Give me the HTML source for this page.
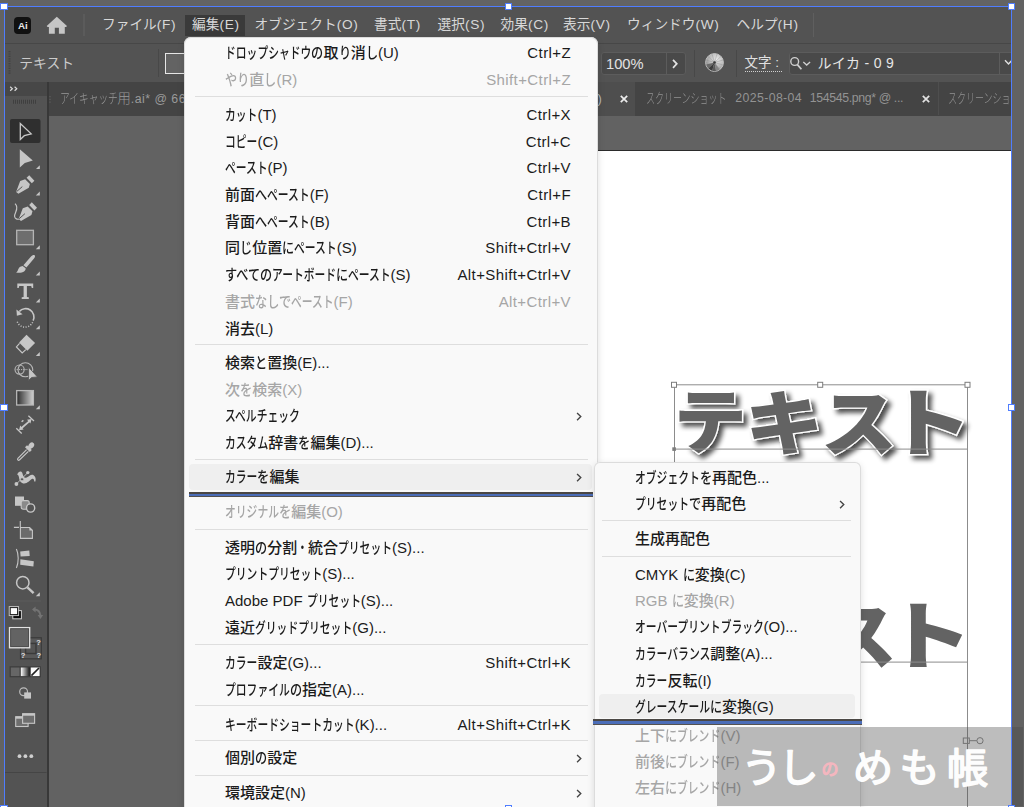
<!DOCTYPE html>
<html lang="ja">
<head>
<meta charset="utf-8">
<title>Illustrator 編集メニュー</title>
<style>
*{box-sizing:border-box;margin:0;padding:0}
html,body{width:1024px;height:807px;overflow:hidden;background:#636363}
body{position:relative;font-family:"Liberation Sans","Noto Sans CJK JP",sans-serif;font-size:13px;color:#d4d4d4}
.a{position:absolute}
svg{position:absolute;overflow:visible}
.kn{display:inline-block;transform-origin:0 50%;white-space:nowrap}
#canvas{left:5px;top:7px;width:1006px;height:800px;background:#626262}
#appbar{left:5px;top:7px;width:1006px;height:36px;background:#535353}
#appline{left:5px;top:43px;width:1006px;height:1px;background:#474747}
#ctrl{left:5px;top:44px;width:1006px;height:38px;background:#535353}
.mi .k{letter-spacing:.7px}
.mi{position:absolute;top:14px;height:22px;line-height:22px;font-size:13.7px;color:#d8d8d8;white-space:nowrap}
#tabs{left:48px;top:82px;width:963px;height:33.6px;background:#444444}
.tab{position:absolute;top:82px;height:33px;line-height:33px;font-size:12.3px;color:#939393;white-space:nowrap;font-weight:300}
#tools{left:5px;top:82px;width:42px;height:725px;background:#535353}
#toolhead{left:5px;top:82px;width:42px;height:14px;background:#474747}
#toolsep{left:47px;top:82px;width:2.3px;height:725px;background:#383838}
#art{left:588px;top:150px;width:423px;height:657px;background:#fff}
.big{position:absolute;left:674.5px;font-family:"Noto Sans CJK JP","Liberation Sans",sans-serif;font-weight:900;font-size:73.5px;line-height:73.5px;color:#636363;white-space:nowrap}
.menu{position:absolute;background:#f9f9f9;border-radius:8px;box-shadow:inset 0 0 0 1px #dcdcdc,0 2px 7px rgba(0,0,0,.13);color:#1b1b1b;font-size:15px;overflow:hidden}
.row{position:absolute;left:0;right:0;height:26px;line-height:26px;white-space:nowrap}
.row .l{position:absolute;left:41px;top:0;font-weight:500}
.row .r{position:absolute;right:26.6px;top:0;letter-spacing:.4px}
.row.dis{color:#a6a6a6}
.sep{position:absolute;height:1px;background:#dedede}
.hl{position:absolute;background:#efefef;border-radius:4px}
.chev{position:absolute;width:6.2px;height:8.9px}
.sub .row .l{left:41.1px}
.hd{position:absolute;width:7.4px;height:7.4px;background:#fff;border:1px solid #4f7dff}
</style>
</head>
<body>
<div class="a" id="canvas"></div>
<div class="a" id="art"></div>
<!-- artboard content -->
<div class="a" style="left:588px;top:150px;width:423px;height:1px;background:#2b2b2b"></div>
<svg style="left:0;top:0" width="1024" height="807" viewBox="0 0 1024 807">
  <defs>
    <filter id="ds" x="-5%" y="-10%" width="112%" height="130%"><feGaussianBlur in="SourceAlpha" stdDeviation="2.5"/><feOffset dx="3.6" dy="3.8"/><feComponentTransfer><feFuncA type="linear" slope=".7"/></feComponentTransfer><feMerge><feMergeNode/><feMergeNode in="SourceGraphic"/></feMerge></filter>
  </defs>
  <g font-family="Noto Sans CJK JP, Liberation Sans, sans-serif" font-weight="900" font-size="73.5" fill="#636363">
    <g stroke="#ffffff" stroke-width="2.6" paint-order="stroke fill" stroke-linejoin="miter" filter="url(#ds)"><text transform="translate(673.85,448.45) scale(0.992,0.956)">テ</text><text transform="translate(744.85,449.07) scale(1.075,0.965)">キ</text><text transform="translate(820.8,449.9) scale(1.04,0.997)">ス</text><text transform="translate(884.5,449.95) scale(1.2,1.011)">ト</text></g>
    <g><text transform="translate(673.85,661.45) scale(0.992,0.956)">テ</text><text transform="translate(744.85,662.07) scale(1.075,0.965)">キ</text><text transform="translate(820.8,662.90) scale(1.04,0.997)">ス</text><text transform="translate(884.5,662.95) scale(1.2,1.011)">ト</text></g>
  </g>
  <g fill="none" stroke="#8c8c8c" stroke-width="1">
    <path d="M674.5 384.8H967.5V807M674.5 384.8V807M674.5 449.1H967.5M674.5 662.1H967.5"/>
  </g>
  <g fill="#ffffff" stroke="#7d7d7d" stroke-width="1">
    <rect x="671.5" y="382.3" width="5" height="5"/><rect x="817.7" y="382.3" width="5" height="5"/><rect x="965" y="382.3" width="5" height="5"/>
  </g>
  <rect x="672.3" y="447.3" width="3.6" height="3.6" fill="#7d7d7d"/>
  <g fill="none" stroke="#8c8c8c" stroke-width="1"><rect x="963.3" y="738" width="6" height="5.4"/><path d="M969.3 740.7H976.8"/><circle cx="980" cy="740.7" r="3.1"/></g>
</svg>

<div class="a" id="appbar"></div>
<div class="a" id="appline"></div>
<div class="a" id="ctrl"></div>

<!-- app bar -->
<div class="a" style="left:14.2px;top:17.2px;width:17.2px;height:16.7px;border-radius:4px;background:#111;color:#e6e6e6;font-size:9.8px;font-weight:bold;line-height:17.2px;text-align:center;letter-spacing:-.2px">Ai</div>
<svg style="left:0;top:0" width="80" height="40" viewBox="0 0 80 40"><path d="M56.8 16.7L46.7 26L47.6 27H48.9V33.8H54.8V27.7H58.9V33.8H64.8V27H66.1L67 26Z" fill="#c6c6c6"/></svg>
<div class="a" style="left:82.6px;top:13.7px;width:2px;height:22px;background:#5b5b5b"></div>
<div class="a" style="left:185px;top:15px;width:60px;height:21px;background:#3a3a3a"></div>
<div class="mi" style="left:102px">ファイル<span class="k">(F)</span></div>
<div class="mi" style="left:192px">編集<span class="k">(E)</span></div>
<div class="mi" style="left:254.5px">オブジェクト<span class="k">(O)</span></div>
<div class="mi" style="left:374px">書式<span class="k">(T)</span></div>
<div class="mi" style="left:437.5px">選択<span class="k">(S)</span></div>
<div class="mi" style="left:500.5px">効果<span class="k">(C)</span></div>
<div class="mi" style="left:563px">表示<span class="k">(V)</span></div>
<div class="mi" style="left:627px">ウィンドウ<span class="k">(W)</span></div>
<div class="mi" style="left:736.5px">ヘルプ<span class="k">(H)</span></div>
<div class="a" style="left:813px;top:13px;width:1px;height:24px;background:#5f5f5f"></div>


<!-- control bar -->
<svg style="left:8px;top:51px" width="3" height="24" viewBox="0 0 3 24"><path d="M1.5 0V24" stroke="#424242" stroke-width="2" stroke-dasharray="1.2 1.2"/></svg>
<div class="a" style="left:19.3px;top:52.6px;height:22px;line-height:22px;font-size:13.8px;color:#cbcbcb">テキスト</div>
<div class="a" style="left:158px;top:49px;width:1px;height:28px;background:#484848"></div>
<div class="a" style="left:165px;top:52.5px;width:30px;height:21px;border:1.6px solid #e6e6e6;background:#636363"></div>
<div class="a" style="left:601px;top:51.5px;width:85px;height:23px;border:1px solid #5c5c5c;border-radius:3px;background:#494949"></div>
<div class="a" style="left:665.5px;top:52.5px;width:1px;height:21px;background:#5c5c5c"></div>
<div class="a" style="left:606px;top:53.1px;height:22px;line-height:22px;font-size:14.7px;color:#e2e2e2">100%</div>
<svg style="left:672px;top:58.6px" width="6" height="10" viewBox="0 0 6 10"><path d="M1 .8L4.8 4.8L1 8.8" fill="none" stroke="#e4e4e4" stroke-width="1.7"/></svg>
<div class="a" style="left:694px;top:50px;width:1px;height:27px;background:#484848"></div>
<svg style="left:705.1px;top:53px" width="19" height="19" viewBox="0 0 19 19">
  <defs><radialGradient id="rg" cx=".62" cy=".32" r=".75"><stop offset="0" stop-color="#e9e9e9"/><stop offset=".55" stop-color="#b9b9b9"/><stop offset="1" stop-color="#7c7c7c"/></radialGradient></defs>
  <circle cx="9.5" cy="9.5" r="8.9" fill="url(#rg)" stroke="#cdcdcd" stroke-width=".9"/>
  <path d="M9.5 9.5L1.2 11.6A8.6 8.6 0 0 0 3.6 15.6Z" fill="#6a6a6a"/>
  <path d="M9.5 9.5L3.6 15.6A8.6 8.6 0 0 0 7.2 17.8Z" fill="#3c3c3c"/>
  <path d="M9.5 9.5L7.2 17.8A8.6 8.6 0 0 0 11 18Z" fill="#5a5a5a"/>
  <path d="M9.5 9.5L11 18A8.6 8.6 0 0 0 14.6 16.4Z" fill="#858585"/>
  <g stroke="#8c8c8c" stroke-width=".5" opacity=".8"><path d="M9.5 9.5L1 7M9.5 9.5L3 3.4M9.5 9.5L7 1M9.5 9.5L12 1M9.5 9.5L16 3.4M9.5 9.5L18 7M9.5 9.5L18 12M9.5 9.5L14.6 16.4"/></g>
  <circle cx="9.5" cy="9.5" r="1.3" fill="#3a3a3a"/>
</svg>
<div class="a" style="left:736px;top:50px;width:1px;height:27px;background:#484848"></div>
<div class="a" style="left:744.5px;top:52px;height:22px;line-height:22px;font-size:13.5px;color:#e0e0e0;white-space:nowrap">文字 :</div>
<div class="a" style="left:744.5px;top:70.5px;width:37.5px;height:0;border-top:1px dotted #d0d0d0"></div>
<div class="a" style="left:789px;top:51.5px;width:230px;height:23px;border:1px solid #5c5c5c;border-radius:3px;background:#494949"></div>
<div class="a" style="left:998.5px;top:52.5px;width:1px;height:21px;background:#5c5c5c"></div>
<svg style="left:0;top:0" width="820" height="80" viewBox="0 0 820 80"><g fill="none" stroke="#d0d0d0"><circle cx="794.7" cy="61.5" r="3.9" stroke-width="1.4"/><path d="M797.4 64.6L801.4 69.2" stroke-width="1.7"/><path d="M803.3 62L806.7 65.1L810.1 62" stroke-width="1.3"/></g></svg>
<div class="a" style="left:817.5px;top:52px;height:22px;line-height:22px;font-size:14px;color:#e6e6e6;white-space:nowrap;letter-spacing:.3px">ルイカ - 0 9</div>
<svg style="left:1003.6px;top:59.4px" width="9" height="7" viewBox="0 0 10 8"><path d="M1 1.5 L5 5.8 L9 1.5" fill="none" stroke="#e0e0e0" stroke-width="1.6"/></svg>

<div class="a" id="tabs"></div>

<!-- tabs -->
<div class="a" style="left:330px;top:82px;width:305px;height:33.6px;background:#4e4e4e"></div>
<svg style="left:48.6px;top:96px" width="2" height="7" viewBox="0 0 2 7"><path d="M1 0V7" stroke="#5e5e5e" stroke-width="1.2" stroke-dasharray="1.2 1.6"/></svg>
<div class="tab" style="left:59.5px;color:#9a9a9a"><span class="kn" style="font-size:13.6px;transform:scaleX(0.715);margin-right:-23.26px">アイキャッチ</span><span style="font-size:13.6px">用</span><span style="letter-spacing:.5px">.ai* @ 66.67% (RGB/</span><span class="kn" style="font-size:13.6px;transform:scaleX(0.7);margin-right:-20.40px">プレビュー</span>)</div>
<div class="tab" style="left:597.6px;color:#b4b4b4;font-size:13px">)</div>
<svg style="left:619.5px;top:94.5px" width="8" height="8" viewBox="0 0 8 8"><path d="M.8 .8L7.2 7.2M7.2 .8L.8 7.2" stroke="#ececec" stroke-width="1.7"/></svg>
<div class="tab" style="left:645.5px"><span class="kn" style="font-size:13.6px;transform:scaleX(0.662);margin-right:-41.37px">スクリーンショット</span></div>
<div class="tab" style="left:735.2px;letter-spacing:.4px">2025-08-04</div>
<div class="tab" style="left:809.8px;letter-spacing:-.36px">154545.png* @ ...</div>
<svg style="left:922px;top:94.5px" width="8" height="8" viewBox="0 0 8 8"><path d="M.8 .8L7.2 7.2M7.2 .8L.8 7.2" stroke="#e2e2e2" stroke-width="1.7"/></svg>
<div class="a" style="left:938px;top:82px;width:1px;height:33px;background:#4e4e4e"></div>
<div class="tab" style="left:948px;width:63px;overflow:hidden"><span class="kn" style="font-size:13.6px;transform:scaleX(0.662);margin-right:-41.37px">スクリーンショット</span></div>

<div class="a" id="tools"></div>
<div class="a" id="toolhead"></div>
<div class="a" id="toolsep"></div>
<!-- tools panel -->
<svg style="left:0;top:0" width="60" height="807" viewBox="0 0 60 807">
<defs>
  <linearGradient id="gr1" x1="0" x2="1" y1="0" y2="0"><stop offset="0" stop-color="#2b2b2b"/><stop offset="1" stop-color="#d2d2d2"/></linearGradient>
  <linearGradient id="gr2" x1="0" x2="1" y1="0" y2="0"><stop offset="0" stop-color="#ffffff"/><stop offset="1" stop-color="#1a1a1a"/></linearGradient>
</defs>
<g fill="#c6c6c6">
<!-- header chevrons + gripper -->
<path d="M10.2 86.7L12.4 88.7L10.2 90.7M14.6 86.7L16.8 88.7L14.6 90.7" fill="none" stroke="#dcdcdc" stroke-width="1.15"/>
<path d="M13 101.7H36" stroke="#3f3f3f" stroke-width="4" stroke-dasharray="1 1" fill="none"/>
<!-- selection (active) -->
<rect x="10" y="119" width="30.5" height="24" rx="2" fill="#2f2f2f"/>
<path d="M20.3 123.6V139.4L24.3 135.7L31.2 133.9Z" fill="none" stroke="#c9c9c9" stroke-width="1.3" stroke-linejoin="miter"/>
<!-- direct selection -->
<path d="M19.8 149.3V167.6L24.8 163L32.8 160.4Z"/>
<path d="M39.8 165.2V169H36Z"/>
<!-- pen -->
<g id="pen"><path d="M16.1 191.9L20.2 181.1L25.1 179.3L29.9 184.1L28.8 187.8L18.4 193.8Z"/><path d="M26.6 177.8L29.2 175.2L34.4 180.7L31.8 183.3Z"/><path d="M16.6 191.6L22.3 186.6" stroke="#535353" stroke-width="1" fill="none"/></g>
<path d="M39.8 191.6V195.6H35.8Z"/>
<!-- curvature -->
<g transform="translate(2.6,27.1)"><path d="M16.1 191.9L20.2 181.1L25.1 179.3L29.9 184.1L28.8 187.8L18.4 193.8Z"/><path d="M26.6 177.8L29.2 175.2L34.4 180.7L31.8 183.3Z"/><path d="M16.6 191.6L22.3 186.6" stroke="#535353" stroke-width="1" fill="none"/></g>
<path d="M15 203.6C20 208 14 213 14.6 216.5C15 219 17.5 219.6 19 219" fill="none" stroke="#c6c6c6" stroke-width="1.2"/>
<!-- rectangle -->
<rect x="16.7" y="230.3" width="16.7" height="14.4" fill="#6e6e6e" stroke="#b4b4b4" stroke-width="1.3"/>
<path d="M39.8 245.2V249.2H35.8Z"/>
<!-- brush -->
<path d="M34.6 255.2C35.6 256 34.8 257.6 34 258.6L26.4 267.4L23.4 265.2L31 256.6C32 255.4 33.6 254.6 34.6 255.2Z"/>
<path d="M22.6 265.9L25.6 268.2C26 271 22.5 273.6 16 272.6C18.6 271.4 17.6 266.4 22.6 265.9Z"/>
<path d="M39.8 271.6V275.6H35.8Z"/>
<!-- type -->
<path d="M17.3 283.5H33.2V288H31.8L31.2 286.1H26.9V296.9L28.8 297.3V299.1H21.7V297.3L23.6 296.9V286.1H19.3L18.7 288H17.3Z"/>
<path d="M39.8 298.6V302.6H35.8Z"/>
<!-- rotate -->
<path d="M19.3 311.6A8.3 8.3 0 0 1 33.1 320.6" fill="none" stroke="#c6c6c6" stroke-width="1.6"/>
<path d="M16.4 309.4L16.9 315.8L22.6 314.2Z"/>
<path d="M32.6 322.2A8.3 8.3 0 0 1 17 321" fill="none" stroke="#c6c6c6" stroke-width="1.5" stroke-dasharray="1 1.6"/>
<path d="M39.8 325.2V329.2H35.8Z"/>
<!-- eraser -->
<path d="M26.5 334.7L35.1 342.9L27.3 350.7L19.1 342.5Z"/>
<path d="M19.6 343.4L16.4 346.9L22.2 353L25.8 349.6" fill="none" stroke="#c6c6c6" stroke-width="1.2"/>
<path d="M39.8 352V356H35.8Z"/>
<!-- shape builder -->
<circle cx="19.6" cy="369.6" r="4.6" fill="none" stroke="#b8b8b8" stroke-width="1.1"/>
<ellipse cx="25.4" cy="369.8" rx="7.4" ry="7" fill="none" stroke="#b8b8b8" stroke-width="1.1"/>
<path d="M16.6 369.6H28" stroke="#b8b8b8" stroke-width="1" stroke-dasharray="1.2 1" fill="none"/>
<path d="M28.6 367.2V380.4L31.6 377.5L37.4 376.9Z" stroke="#535353" stroke-width=".8"/>
<!-- gradient -->
<rect x="16.7" y="390.6" width="16.7" height="14.4" fill="url(#gr1)" stroke="#b8b8b8" stroke-width="1.3"/>
<path d="M39.8 405.2V409.2H35.8Z"/>
<!-- measure -->
<g fill="none" stroke="#c6c6c6"><path d="M16.3 428.3L21.7 433.5M28.4 415.7L34 420.9" stroke-width="1.3"/><path d="M20.4 429L30.4 420.4" stroke-width="1.8"/><path d="M21.6 421.8L23.4 420.4" stroke-width="1.4"/></g>
<path d="M19 430.2L20.2 425.6L23.6 429.4ZM31.6 419L30.4 423.6L27 419.8Z"/>
<!-- eyedropper -->
<path d="M26.6 449.6L17.9 458.4C17 459.4 18.2 460.8 19.4 460L28.4 451.4" fill="none" stroke="#c6c6c6" stroke-width="1.2"/>
<path d="M25 447.2L27 445.2L28.2 446.2C28.6 444.4 30.6 442 32.6 442.4C34.6 443 34.8 445.2 33.6 446.8C32.8 447.8 31.6 448.6 30.6 448.8L31.8 450L29.8 452Z"/>
<!-- puppet warp -->
<path d="M17.2 474.6C18.4 471 21.6 470.4 22.4 473.2C23.2 476 24 478.6 26.6 477.6C29.4 476.4 31 473.6 33.6 475.2C36 476.8 35.8 479.6 35.4 481.6L34.2 481.4C34.2 479.6 33.4 478.2 31.8 479C29.600000000000001 480.2 27.4 484 23.2 483.4C20.4 483 19.4 480.4 19 477.600000000000001C18.8 476 18.2 475 17.2 474.6Z"/>
<circle cx="27.8" cy="472.6" r="1.7"/><circle cx="16.4" cy="484" r="1.9"/>
<path d="M16.4 484L27.8 472.6" stroke="#c6c6c6" stroke-width=".9" fill="none"/>
<circle cx="22" cy="479.2" r="1.5" fill="#535353" stroke="#c6c6c6" stroke-width=".7"/>
<!-- blend -->
<rect x="15" y="496.5" width="9" height="9.3"/>
<rect x="21.2" y="500.6" width="8" height="8.6" rx="2" fill="#8a8a8a" stroke="#c6c6c6" stroke-width="1.1"/>
<circle cx="30.6" cy="508" r="4.1" fill="#535353" stroke="#c6c6c6" stroke-width="1.4"/>
<!-- artboard -->
<path d="M20.4 527.5H29.6L32.4 530.3V538.4H20.4Z" fill="#6b6b6b" stroke="#c6c6c6" stroke-width="1.1"/>
<path d="M29.4 527.5V530.5H32.4Z"/>
<path d="M20.3 521V527M13.9 527.4H19" stroke="#c6c6c6" stroke-width="1.1" fill="none"/>
<!-- align on path -->
<path d="M16.4 548.9C18.8 554 18.8 562.6 16.4 567.9" fill="none" stroke="#c6c6c6" stroke-width="1.1"/>
<path d="M20.2 551.4L29.3 550.6L29.7 556L20.6 556.6Z"/>
<path d="M20.4 559.3L33.8 561.2L33.4 566.6L20.2 564.8Z"/>
<!-- zoom -->
<circle cx="22.8" cy="582.7" r="6.2" fill="none" stroke="#c6c6c6" stroke-width="1.5"/>
<path d="M27.4 587.4L33.6 593.1" stroke="#c6c6c6" stroke-width="2.4" fill="none"/>
<path d="M39.8 592.2V596.2H35.8Z"/>
</g>
<!-- separator -->
<rect x="8" y="600.5" width="33" height="1" fill="#5c5c5c"/>
<!-- default fill/stroke -->
<rect x="12.8" y="610.6" width="8.6" height="8.2" fill="#0a0a0a" stroke="#cfcfcf" stroke-width="1"/>
<rect x="10.2" y="607.6" width="7.4" height="7" fill="#fdfdfd" stroke="#1c1c1c" stroke-width="1"/>
<rect x="9.2" y="606.6" width="9.4" height="9" fill="none" stroke="#c8c8c8" stroke-width=".9"/>
<!-- swap -->
<path d="M33.4 609.4C37.4 609.2 40 611 40.4 615.4" fill="none" stroke="#737373" stroke-width="2"/>
<path d="M32 609.4L35.6 606.4V612.4ZM40.4 619L37.6 615H43.2Z" fill="#737373"/>
<!-- stroke box -->
<rect x="20.5" y="637.8" width="20.8" height="21" fill="#595959" stroke="#3a3a3a" stroke-width="1.2"/>
<rect x="25.6" y="643.4" width="10.4" height="10.1" fill="#555555" stroke="#3a3a3a" stroke-width="1.4"/>
<!-- fill box -->
<rect x="9.5" y="627.6" width="20.2" height="20.2" fill="#636363" stroke="#e2e2e2" stroke-width="1.3"/>
<rect x="10.7" y="628.8" width="17.8" height="17.8" fill="none" stroke="#4a4a4a" stroke-width=".8"/>
<g font-family="Liberation Sans, sans-serif" font-size="7.5" font-weight="bold" fill="#e0e0e0"><text x="36.2" y="644.6">?</text><text x="20.8" y="657.6">?</text><text x="36.6" y="657.6">?</text></g>
<!-- colour mode buttons -->
<rect x="9.6" y="666.3" width="31.2" height="11" fill="#3c3c3c"/>
<rect x="10.8" y="667.5" width="8.8" height="8.6" fill="#666666"/>
<rect x="20.8" y="667.5" width="8.8" height="8.6" fill="url(#gr2)"/>
<rect x="30.8" y="667.5" width="8.8" height="8.6" fill="#fbfbfb"/>
<path d="M31.4 675.6L39 668" stroke="#222" stroke-width="1.7"/>
<!-- draw mode -->
<circle cx="23.6" cy="691.8" r="3.9" fill="none" stroke="#bdbdbd" stroke-width="1.2"/>
<rect x="24.2" y="692.4" width="6.8" height="6.2" fill="#c6c6c6"/>
<!-- screen mode -->
<rect x="15.7" y="716.7" width="12.4" height="9.8" fill="#6e6e6e" stroke="#c6c6c6" stroke-width="1.1"/>
<rect x="15.7" y="716.7" width="12.4" height="2" fill="#c6c6c6"/>
<rect x="22.6" y="713.7" width="12" height="9.6" fill="#6e6e6e" stroke="#c6c6c6" stroke-width="1.1"/>
<rect x="22.6" y="713.7" width="12" height="2" fill="#c6c6c6"/>
<!-- more -->
<circle cx="19.5" cy="756.2" r="1.9" fill="#cfcfcf"/><circle cx="25.4" cy="756.2" r="1.9" fill="#cfcfcf"/><circle cx="31.3" cy="756.2" r="1.9" fill="#cfcfcf"/>
<rect x="5" y="772" width="41.5" height="1" fill="#454545"/>
</svg>


<!-- edit menu -->
<div class="menu" style="left:184px;top:36.5px;width:413.6px;height:800px;border-radius:7px">
<div class="hl" style="left:5px;top:427.5px;width:403px;height:26px"></div>
<div class="row" style="top:3.6px"><span class="l"><span class="kn" style="transform:scaleX(0.72);margin-right:-33.60px">ドロップシャドウ</span><span class="kn" style="transform:scaleX(0.81);margin-right:-2.85px">の</span>取<span class="kn" style="transform:scaleX(0.81);margin-right:-2.85px">り</span>消<span class="kn" style="transform:scaleX(0.81);margin-right:-2.85px">し</span>(U)</span><span class="r">Ctrl+Z</span></div>
<div class="row dis" style="top:30.5px"><span class="l"><span class="kn" style="transform:scaleX(0.81);margin-right:-5.70px">やり</span>直<span class="kn" style="transform:scaleX(0.81);margin-right:-2.85px">し</span>(R)</span><span class="r">Shift+Ctrl+Z</span></div>
<div class="sep" style="left:10.5px;top:59.4px;width:393px"></div>
<div class="row" style="top:65.8px"><span class="l"><span class="kn" style="transform:scaleX(0.72);margin-right:-12.60px">カット</span>(T)</span><span class="r">Ctrl+X</span></div>
<div class="row" style="top:92.3px"><span class="l"><span class="kn" style="transform:scaleX(0.72);margin-right:-12.60px">コピー</span>(C)</span><span class="r">Ctrl+C</span></div>
<div class="row" style="top:118.8px"><span class="l"><span class="kn" style="transform:scaleX(0.72);margin-right:-16.80px">ペースト</span>(P)</span><span class="r">Ctrl+V</span></div>
<div class="row" style="top:145.5px"><span class="l">前面<span class="kn" style="transform:scaleX(0.81);margin-right:-2.85px">へ</span><span class="kn" style="transform:scaleX(0.72);margin-right:-16.80px">ペースト</span>(F)</span><span class="r">Ctrl+F</span></div>
<div class="row" style="top:172.1px"><span class="l">背面<span class="kn" style="transform:scaleX(0.81);margin-right:-2.85px">へ</span><span class="kn" style="transform:scaleX(0.72);margin-right:-16.80px">ペースト</span>(B)</span><span class="r">Ctrl+B</span></div>
<div class="row" style="top:198.8px"><span class="l">同<span class="kn" style="transform:scaleX(0.81);margin-right:-2.85px">じ</span>位置<span class="kn" style="transform:scaleX(0.81);margin-right:-2.85px">に</span><span class="kn" style="transform:scaleX(0.72);margin-right:-16.80px">ペースト</span>(S)</span><span class="r">Shift+Ctrl+V</span></div>
<div class="row" style="top:225.4px"><span class="l"><span class="kn" style="transform:scaleX(0.81);margin-right:-11.40px">すべての</span><span class="kn" style="transform:scaleX(0.72);margin-right:-25.20px">アートボード</span><span class="kn" style="transform:scaleX(0.81);margin-right:-2.85px">に</span><span class="kn" style="transform:scaleX(0.72);margin-right:-16.80px">ペースト</span>(S)</span><span class="r">Alt+Shift+Ctrl+V</span></div>
<div class="row dis" style="top:252.1px"><span class="l">書式<span class="kn" style="transform:scaleX(0.81);margin-right:-8.55px">なしで</span><span class="kn" style="transform:scaleX(0.72);margin-right:-16.80px">ペースト</span>(F)</span><span class="r">Alt+Ctrl+V</span></div>
<div class="row" style="top:279.1px"><span class="l">消去(L)</span></div>
<div class="sep" style="left:10.5px;top:307.2px;width:393px"></div>
<div class="row" style="top:313.6px"><span class="l">検索<span class="kn" style="transform:scaleX(0.81);margin-right:-2.85px">と</span>置換(E)...</span></div>
<div class="row dis" style="top:340.5px"><span class="l">次<span class="kn" style="transform:scaleX(0.81);margin-right:-2.85px">を</span>検索(X)</span></div>
<div class="row" style="top:366.9px"><span class="l"><span class="kn" style="transform:scaleX(0.72);margin-right:-29.40px">スペルチェック</span></span><svg class="chev" style="right:15.4px;top:8.6px" viewBox="0 0 7 10"><path d="M1.2 1L5.4 5.1L1.2 9.2" fill="none" stroke="#444444" stroke-width="1.55"/></svg></div>
<div class="row" style="top:393.4px"><span class="l"><span class="kn" style="transform:scaleX(0.72);margin-right:-16.80px">カスタム</span>辞書<span class="kn" style="transform:scaleX(0.81);margin-right:-2.85px">を</span>編集(D)...</span></div>
<div class="sep" style="left:10.5px;top:422.3px;width:393px"></div>
<div class="row" style="top:427.8px"><span class="l"><span class="kn" style="transform:scaleX(0.72);margin-right:-12.60px">カラー</span><span class="kn" style="transform:scaleX(0.81);margin-right:-2.85px">を</span>編集</span><svg class="chev" style="right:15.4px;top:8.6px" viewBox="0 0 7 10"><path d="M1.2 1L5.4 5.1L1.2 9.2" fill="none" stroke="#444444" stroke-width="1.55"/></svg></div>
<div class="row dis" style="top:462.7px"><span class="l"><span class="kn" style="transform:scaleX(0.72);margin-right:-21.00px">オリジナル</span><span class="kn" style="transform:scaleX(0.81);margin-right:-2.85px">を</span>編集(O)</span></div>
<div class="sep" style="left:10.5px;top:492.0px;width:393px"></div>
<div class="row" style="top:498.4px"><span class="l">透明<span class="kn" style="transform:scaleX(0.81);margin-right:-2.85px">の</span>分割<span class="kn" style="transform:scaleX(0.72);margin-right:-4.20px">・</span>統合<span class="kn" style="transform:scaleX(0.72);margin-right:-21.00px">プリセット</span>(S)...</span></div>
<div class="row" style="top:524.9px"><span class="l"><span class="kn" style="transform:scaleX(0.72);margin-right:-37.80px">プリントプリセット</span>(S)...</span></div>
<div class="row" style="top:551.7px"><span class="l">Adobe PDF <span class="kn" style="transform:scaleX(0.72);margin-right:-21.00px">プリセット</span>(S)...</span></div>
<div class="row" style="top:578.2px"><span class="l">遠近<span class="kn" style="transform:scaleX(0.72);margin-right:-37.80px">グリッドプリセット</span>(G)...</span></div>
<div class="sep" style="left:10.5px;top:607.2px;width:393px"></div>
<div class="row" style="top:613.3px"><span class="l"><span class="kn" style="transform:scaleX(0.72);margin-right:-12.60px">カラー</span>設定(G)...</span><span class="r">Shift+Ctrl+K</span></div>
<div class="row" style="top:640.5px"><span class="l"><span class="kn" style="transform:scaleX(0.72);margin-right:-25.20px">プロファイル</span><span class="kn" style="transform:scaleX(0.81);margin-right:-2.85px">の</span>指定(A)...</span></div>
<div class="sep" style="left:10.5px;top:668.6px;width:393px"></div>
<div class="row" style="top:675.0px"><span class="l"><span class="kn" style="transform:scaleX(0.72);margin-right:-50.40px">キーボードショートカット</span>(K)...</span><span class="r">Alt+Shift+Ctrl+K</span></div>
<div class="sep" style="left:10.5px;top:703.5px;width:393px"></div>
<div class="row" style="top:708.5px"><span class="l">個別<span class="kn" style="transform:scaleX(0.81);margin-right:-2.85px">の</span>設定</span><svg class="chev" style="right:15.4px;top:8.6px" viewBox="0 0 7 10"><path d="M1.2 1L5.4 5.1L1.2 9.2" fill="none" stroke="#444444" stroke-width="1.55"/></svg></div>
<div class="sep" style="left:10.5px;top:738.7px;width:393px"></div>
<div class="row" style="top:743.5px"><span class="l">環境設定(N)</span><svg class="chev" style="right:15.4px;top:8.6px" viewBox="0 0 7 10"><path d="M1.2 1L5.4 5.1L1.2 9.2" fill="none" stroke="#444444" stroke-width="1.55"/></svg></div>
</div>
<div class="a" style="left:189px;top:491.6px;width:403.8px;height:5.4px;background:#4b6db8;border-top:2.3px solid #4b4845;border-bottom:.7px solid #55524f"></div>


<!-- colour submenu -->
<div class="menu sub" style="left:593.9px;top:461.8px;width:267.1px;height:400px;border-radius:6px">
<div class="hl" style="left:5.1px;top:232.2px;width:256px;height:24.5px"></div>
<div class="row" style="top:3.0px"><span class="l"><span class="kn" style="transform:scaleX(0.72);margin-right:-25.20px">オブジェクト</span><span class="kn" style="transform:scaleX(0.81);margin-right:-2.85px">を</span>再配色...</span></div>
<div class="row" style="top:29.3px"><span class="l"><span class="kn" style="transform:scaleX(0.72);margin-right:-21.00px">プリセット</span><span class="kn" style="transform:scaleX(0.81);margin-right:-2.85px">で</span>再配色</span><svg class="chev" style="right:15.7px;top:8.6px" viewBox="0 0 7 10"><path d="M1.2 1L5.4 5.1L1.2 9.2" fill="none" stroke="#444444" stroke-width="1.55"/></svg></div>
<div class="sep" style="left:8.6px;top:58.7px;width:249px"></div>
<div class="row" style="top:63.9px"><span class="l">生成再配色</span></div>
<div class="sep" style="left:8.6px;top:94.2px;width:249px"></div>
<div class="row" style="top:99.9px"><span class="l">CMYK <span class="kn" style="transform:scaleX(0.81);margin-right:-2.85px">に</span>変換(C)</span></div>
<div class="row dis" style="top:126.2px"><span class="l">RGB <span class="kn" style="transform:scaleX(0.81);margin-right:-2.85px">に</span>変換(R)</span></div>
<div class="row" style="top:152.6px"><span class="l"><span class="kn" style="transform:scaleX(0.72);margin-right:-50.40px">オーバープリントブラック</span>(O)...</span></div>
<div class="row" style="top:179.0px"><span class="l"><span class="kn" style="transform:scaleX(0.72);margin-right:-29.40px">カラーバランス</span>調整(A)...</span></div>
<div class="row" style="top:205.9px"><span class="l"><span class="kn" style="transform:scaleX(0.72);margin-right:-12.60px">カラー</span>反転(I)</span></div>
<div class="row" style="top:232.7px"><span class="l"><span class="kn" style="transform:scaleX(0.72);margin-right:-29.40px">グレースケール</span><span class="kn" style="transform:scaleX(0.81);margin-right:-2.85px">に</span>変換(G)</span></div>
<div class="row dis" style="top:260.9px"><span class="l">上下<span class="kn" style="transform:scaleX(0.81);margin-right:-2.85px">に</span><span class="kn" style="transform:scaleX(0.72);margin-right:-16.80px">ブレンド</span>(V)</span></div>
<div class="row dis" style="top:286.9px"><span class="l">前後<span class="kn" style="transform:scaleX(0.81);margin-right:-2.85px">に</span><span class="kn" style="transform:scaleX(0.72);margin-right:-16.80px">ブレンド</span>(F)</span></div>
<div class="row dis" style="top:313.2px"><span class="l">左右<span class="kn" style="transform:scaleX(0.81);margin-right:-2.85px">に</span><span class="kn" style="transform:scaleX(0.72);margin-right:-16.80px">ブレンド</span>(H)</span></div>
</div>
<div class="a" style="left:592.5px;top:718.8px;width:269.5px;height:5.8px;background:#4b6db8;border-top:2.4px solid #4b4845;border-bottom:.7px solid #55524f"></div>

<div class="a" style="left:1012px;top:0;width:12px;height:807px;background:#626262"></div>
<!-- watermark -->
<div class="a" style="left:716.5px;top:727px;width:306.5px;height:78.5px;background:rgba(72,72,72,.36)"></div>
<svg style="left:0;top:0" width="1024" height="807" viewBox="0 0 1024 807">
  <g font-family="Noto Sans CJK JP, Liberation Sans, sans-serif" font-weight="400" fill="#fdfdfd" stroke="#fdfdfd" stroke-width="1.7" stroke-linejoin="round" stroke-linecap="round">
    <text x="741.5" y="782" font-size="40">う</text>
    <text x="778.5" y="782" font-size="40">し</text>
    <text x="821.5" y="775" font-size="17" fill="#f4b6bf" stroke="#f4b6bf" stroke-width="1.2">の</text>
    <text x="853" y="782" font-size="40">め</text>
    <text x="899.5" y="782" font-size="40">も</text>
    <text x="947" y="783" font-size="41">帳</text>
  </g>
</svg>
<!-- selection frame of the placed screenshot -->
<div class="a" style="left:4px;top:6px;width:1008px;height:803px;border:1px solid #4f7dff;border-bottom:none"></div>
<div class="hd" style="left:.4px;top:3px"></div><div class="hd" style="left:504.5px;top:3px"></div><div class="hd" style="left:1007.5px;top:3px"></div>
<div class="hd" style="left:.4px;top:403.6px"></div><div class="hd" style="left:1007.5px;top:403.6px"></div>
<div class="hd" style="left:.4px;top:805px"></div><div class="hd" style="left:504.5px;top:805px"></div><div class="hd" style="left:1007.5px;top:805px"></div>

</body>
</html>
